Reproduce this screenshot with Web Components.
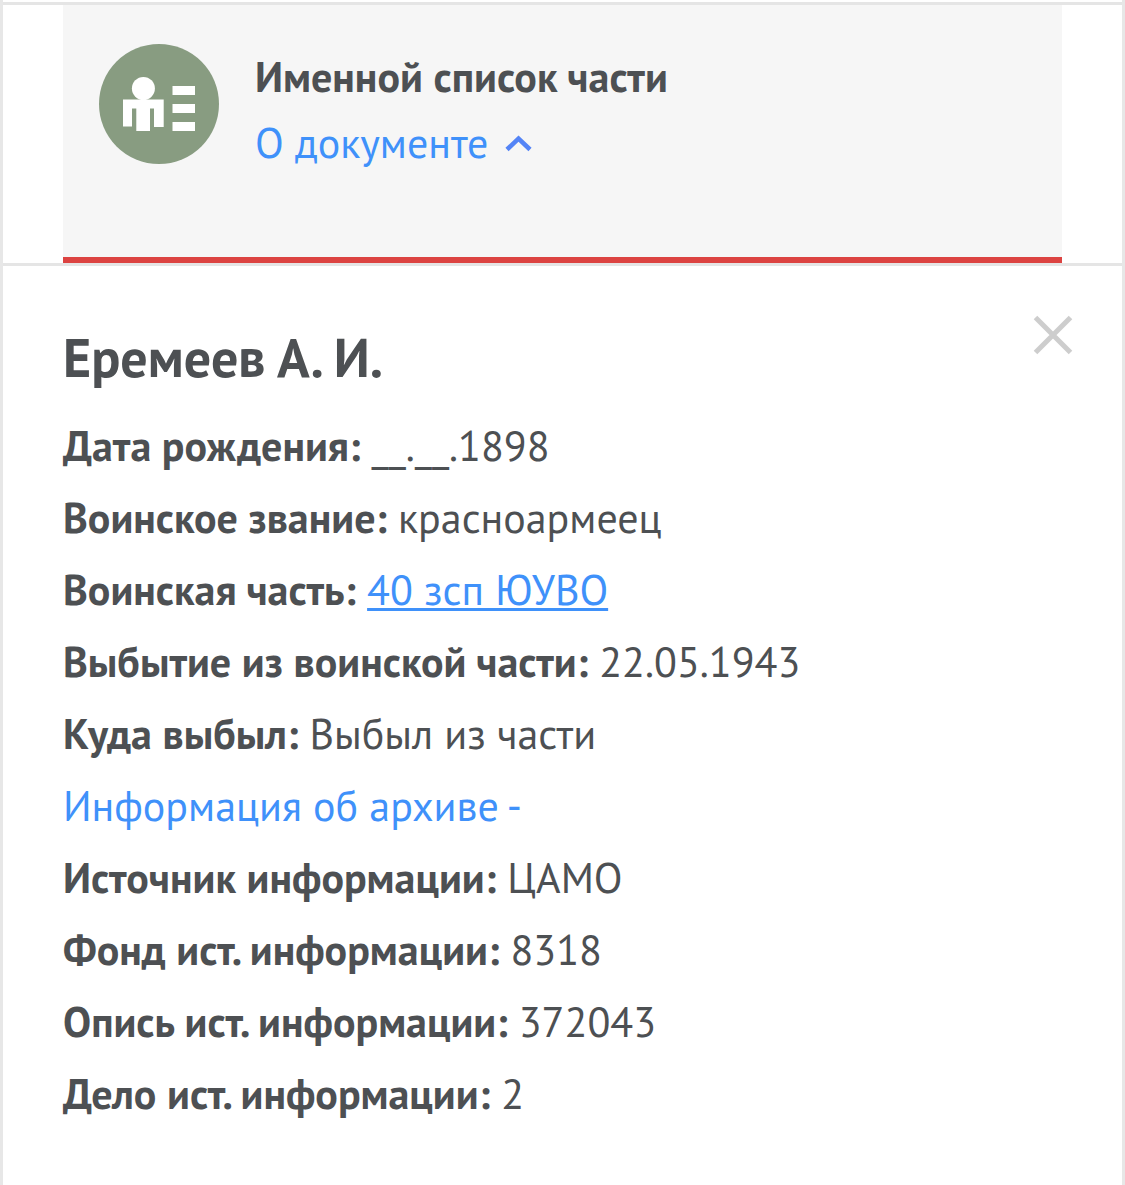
<!DOCTYPE html>
<html lang="ru">
<head>
<meta charset="utf-8">
<meta name="viewport" content="width=device-width, initial-scale=1">
<title>Именной список части</title>
<style>
  body {
    margin: 0;
    background-color: #fff;
    color: #4d5053;
    font-family: "PT Sans", Roboto, "Noto Sans", sans-serif;
    font-size: 42px;
  }
</style>
</head>
<body>
<record-page>
  <document-card slot="header">
    <span slot="title">Именной список части</span>
    <span slot="toggle">О документе</span>
  </document-card>
  <person-record>
    <span slot="name">Еремеев А. И.</span>
    <record-field label="Дата рождения:">__.__.1898</record-field>
    <record-field label="Воинское звание:">красноармеец</record-field>
    <record-field label="Воинская часть:" href="#">40 зсп ЮУВО</record-field>
    <record-field label="Выбытие из воинской части:">22.05.1943</record-field>
    <record-field label="Куда выбыл:">Выбыл из части</record-field>
    <archive-info slot="archive" label="Информация об архиве">
      <record-field label="Источник информации:">ЦАМО</record-field>
      <record-field label="Фонд ист. информации:">8318</record-field>
      <record-field label="Опись ист. информации:">372043</record-field>
      <record-field label="Дело ист. информации:">2</record-field>
    </archive-info>
  </person-record>
</record-page>

<script>
const RECORD_PAGE_TEMPLATE = document.createElement('template');
RECORD_PAGE_TEMPLATE.innerHTML = `
  <style>
    :host {
      display: block;
      box-sizing: border-box;
      min-height: 100vh;
      padding-top: 2px;
      border: solid #e7e7e7;
      border-width: 0 3px;
    }

    .page__header {
      padding: 0 60px;
      border: solid #e5e5e5;
      border-width: 3px 0;
    }
  </style>

  <header class="page__header"><slot name="header"></slot></header>
  <main><slot></slot></main>
`;

const DOCUMENT_CARD_TEMPLATE = document.createElement('template');
DOCUMENT_CARD_TEMPLATE.innerHTML = `
  <style>
    :host {
      display: flex;
      align-items: flex-start;
      gap: 36px;
      padding: 39px 36px 81px;
      background-color: #f6f6f6;
      border-bottom: 6px solid #dc4341;
    }

    .card__icon {
      flex: none;
      width: 120px;
      height: 120px;
    }

    .card__title {
      margin: 0;
      font-size: inherit;
      font-weight: 700;
      line-height: 66px;
    }

    .card__toggle {
      display: flex;
      align-items: center;
      gap: 16px;
      padding: 0;
      border: 0;
      background: none;
      color: #3f91fa;
      font: inherit;
      line-height: 66px;
      cursor: pointer;
    }

    .card__arrow {
      width: 28px;
      height: 18px;
    }
  </style>

  <svg class="card__icon" viewBox="0 0 120 120" aria-hidden="true">
    <circle cx="60" cy="60" r="60" fill="#889c81"/>
    <g fill="#fff">
      <circle cx="44.400" cy="44.500" r="11.500"/>
      <path d="M24 55.500h40.700V83H55V64.500h-4V87H37.300V64.500H33V82.500h-9z"/>
      <path d="M73.500 42H96v9H73.500zM73.500 60H96v9H73.500zM73.500 78H96v9H73.500z"/>
    </g>
  </svg>
  <div>
    <h2 class="card__title"><slot name="title"></slot></h2>
    <button class="card__toggle" type="button" aria-expanded="true">
      <slot name="toggle"></slot>
      <svg class="card__arrow" viewBox="0 0 28 18" aria-hidden="true">
        <path d="M3 15.500 14.500 4.500l11.500 11" fill="none" stroke="#5484f6" stroke-width="4.500"/>
      </svg>
    </button>
  </div>
`;

const PERSON_RECORD_TEMPLATE = document.createElement('template');
PERSON_RECORD_TEMPLATE.innerHTML = `
  <style>
    :host {
      display: block;
      padding: 50px 50px 54px 60px;
    }

    .record__top {
      display: flex;
      justify-content: space-between;
      align-items: flex-start;
    }

    .record__name {
      margin: 8px 0 0;
      font-size: 54px;
      font-weight: 700;
      line-height: 66px;
    }

    .record__close {
      flex: none;
      display: flex;
      padding: 0;
      border: 0;
      background: none;
      cursor: pointer;
    }

    .record__close svg {
      width: 38px;
      height: 38px;
      overflow: visible;
    }

    .record__fields {
      margin-top: 20px;
    }
  </style>

  <div class="record__top">
    <h1 class="record__name"><slot name="name"></slot></h1>
    <button class="record__close" type="button" aria-label="Закрыть">
      <svg viewBox="0 0 38 38" aria-hidden="true">
        <path d="M1.500 1.500l35 35M36.500 1.500l-35 35" fill="none" stroke="#cdcdcd" stroke-width="5"/>
      </svg>
    </button>
  </div>
  <div class="record__fields">
    <slot></slot>
    <slot name="archive"></slot>
  </div>
`;

const RECORD_FIELD_TEMPLATE = document.createElement('template');
RECORD_FIELD_TEMPLATE.innerHTML = `
  <style>
    :host {
      display: block;
      line-height: 72px;
    }

    a {
      color: #3f91fa;
      text-decoration-thickness: 3px;
      text-underline-offset: 3px;
      text-decoration-skip-ink: none;
    }
  </style>

  <b class="field__label"></b>
  <span class="field__value"><slot></slot></span>
`;

const ARCHIVE_INFO_TEMPLATE = document.createElement('template');
ARCHIVE_INFO_TEMPLATE.innerHTML = `
  <style>
    :host {
      display: block;
    }

    .archive__toggle {
      display: block;
      padding: 0;
      border: 0;
      background: none;
      color: #3f91fa;
      font: inherit;
      line-height: 72px;
      text-align: left;
      cursor: pointer;
    }
  </style>

  <button class="archive__toggle" type="button" aria-expanded="true"></button>
  <div class="archive__fields"><slot></slot></div>
`;

class BaseElement extends HTMLElement {
  constructor(template) {
    super();

    this.attachShadow({ mode: 'open' });
    this.shadowRoot.appendChild(template.content.cloneNode(true));
  }
}

class RecordPage extends BaseElement {
  constructor() {
    super(RECORD_PAGE_TEMPLATE);
  }
}

class DocumentCard extends BaseElement {
  constructor() {
    super(DOCUMENT_CARD_TEMPLATE);
  }
}

class PersonRecord extends BaseElement {
  constructor() {
    super(PERSON_RECORD_TEMPLATE);

    this.shadowRoot.querySelector('.record__close').addEventListener('click', () => {
      this.style.display = 'none';
    });
  }
}

class RecordField extends BaseElement {
  constructor() {
    super(RECORD_FIELD_TEMPLATE);

    this.shadowRoot.querySelector('.field__label').textContent = this.getAttribute('label');

    if (this.hasAttribute('href')) {
      const value = this.shadowRoot.querySelector('.field__value');
      const link = document.createElement('a');
      link.href = this.getAttribute('href');
      link.append(...value.childNodes);
      value.appendChild(link);
    }
  }
}

class ArchiveInfo extends BaseElement {
  constructor() {
    super(ARCHIVE_INFO_TEMPLATE);

    this.toggle = this.shadowRoot.querySelector('.archive__toggle');
    this.fields = this.shadowRoot.querySelector('.archive__fields');
    this.toggle.addEventListener('click', () => {
      this.fields.hidden = !this.fields.hidden;
      this.render();
    });
    this.render();
  }

  render() {
    const open = !this.fields.hidden;
    this.toggle.textContent = `${this.getAttribute('label')} ${open ? '-' : '+'}`;
    this.toggle.setAttribute('aria-expanded', open);
  }
}

window.customElements.define('record-page', RecordPage);
window.customElements.define('document-card', DocumentCard);
window.customElements.define('person-record', PersonRecord);
window.customElements.define('record-field', RecordField);
window.customElements.define('archive-info', ArchiveInfo);
</script>
</body>
</html>
